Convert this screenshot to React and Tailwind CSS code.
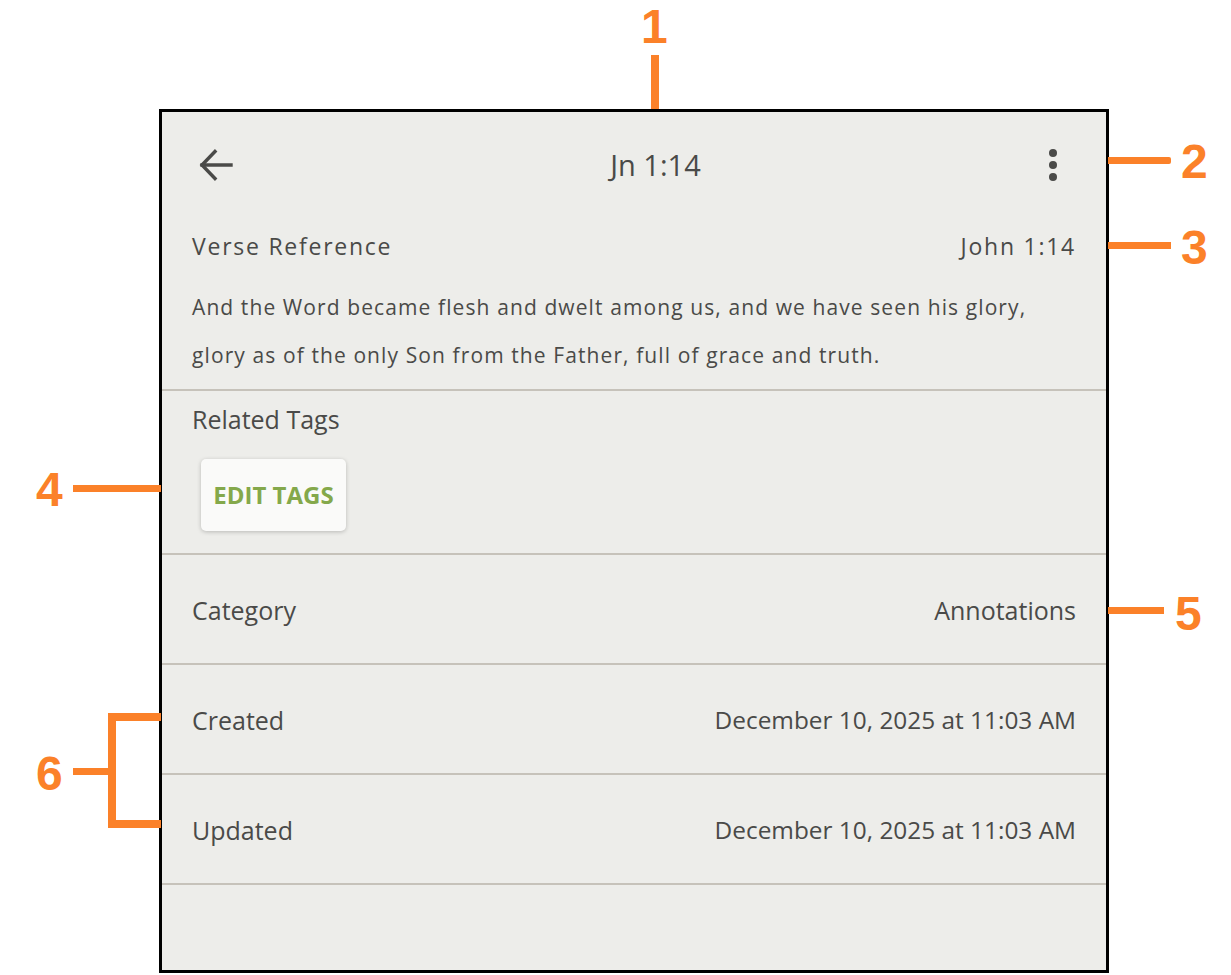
import React from "react";

const labelCls = "text-[25px] text-[#4a4a48]";

function InfoRow({ label, value, small }) {
    return (
        <div className="h-[110px] pt-[3px] flex items-center justify-between px-[30px] border-b-2 border-[#c6c2ba]">
            <span className={labelCls}>{label}</span>
            <span className={small ? "text-[24.4px] text-[#4a4a48]" : labelCls}>{value}</span>
        </div>
    );
}

function BackArrow() {
    return (
        <svg width="36" height="36" viewBox="0 0 36 36" fill="none" stroke="#4a4a48" strokeWidth="3.4" strokeLinecap="square">
            <path d="M4 18 H33" />
            <path d="M17 4.5 L4 18 L17 31.5" />
        </svg>
    );
}

function Kebab() {
    return (
        <div className="flex flex-col items-center gap-[4px]">
            <span className="w-[8px] h-[8px] rounded-full bg-[#4a4a48]" />
            <span className="w-[8px] h-[8px] rounded-full bg-[#4a4a48]" />
            <span className="w-[8px] h-[8px] rounded-full bg-[#4a4a48]" />
        </div>
    );
}

// orange callouts sitting over the screenshot
function Callouts() {
    const num = "absolute font-['Liberation_Sans',Arial,sans-serif] font-bold text-[48px] leading-none text-[#fb8129]";
    const bar = "absolute bg-[#fb8129]";
    return (
        <>
            <span className={`${num} left-[641px] top-[3px]`}>1</span>
            <div className={`${bar} left-[651px] top-[55px] w-[8px] h-[54px]`} />

            <div className={`${bar} left-[1108px] top-[157px] w-[63px] h-[7px] rounded-r-[2px]`} />
            <span className={`${num} left-[1181px] top-[138px]`}>2</span>

            <div className={`${bar} left-[1108px] top-[242px] w-[63px] h-[7px]`} />
            <span className={`${num} left-[1181px] top-[224px]`}>3</span>

            <span className={`${num} left-[36px] top-[466px]`}>4</span>
            <div className={`${bar} left-[73px] top-[485px] w-[88px] h-[7px]`} />

            <div className={`${bar} left-[1108px] top-[607px] w-[56px] h-[7px]`} />
            <span className={`${num} left-[1175px] top-[590px]`}>5</span>

            <span className={`${num} left-[36px] top-[750px]`}>6</span>
            <div className={`${bar} left-[73px] top-[768px] w-[36px] h-[7px]`} />
            <div className={`${bar} left-[108px] top-[713px] w-[8px] h-[115px]`} />
            <div className={`${bar} left-[108px] top-[713px] w-[53px] h-[8px]`} />
            <div className={`${bar} left-[108px] top-[820px] w-[53px] h-[8px]`} />
        </>
    );
}

export default function App() {
    return (
        <div className="relative w-[1231px] h-[975px] bg-white overflow-hidden font-['Open_Sans','Noto_Sans',sans-serif]">
            <div className="ml-[159px] mt-[109px] w-[950px] h-[864px] border-[3px] border-black bg-[#ededea] flex flex-col">
                {/* top bar */}
                <div className="h-[106px] flex items-center justify-between pl-[36px] pr-[49px] shrink-0">
                    <BackArrow />
                    <span className="text-[29px] text-[#4a4a48] ml-[28px]">Jn 1:14</span>
                    <Kebab />
                </div>

                {/* verse */}
                <div className="px-[30px] pb-[10px] border-b-2 border-[#c6c2ba]">
                    <div className="mt-[4px] h-[48px] flex items-center justify-between text-[23px] tracking-[1.75px] text-[#4a4a48]">
                        <span>Verse Reference</span>
                        <span>John 1:14</span>
                    </div>
                    <p className="mt-[13px] text-[21px] leading-[48px] tracking-[1.1px] text-[#4a4a48]">
                        And the Word became flesh and dwelt among us, and we have seen his glory,
                        <br />
                        glory as of the only Son from the Father, full of grace and truth.
                    </p>
                </div>

                {/* tags */}
                <div className="px-[30px] pt-[5px] pb-[22px] border-b-2 border-[#c6c2ba]">
                    <div className={`h-[48px] flex items-center ${labelCls}`}>Related Tags</div>
                    <button className="mt-[15px] ml-[9px] w-[145px] h-[72px] rounded-[5px] bg-[#fafaf9] shadow-[0_1px_4px_rgba(0,0,0,0.22)] text-[24px] font-bold text-[#84a84b]">
                        EDIT TAGS
                    </button>
                </div>

                <InfoRow label="Category" value="Annotations" />
                <InfoRow label="Created" value="December 10, 2025 at 11:03 AM" small />
                <InfoRow label="Updated" value="December 10, 2025 at 11:03 AM" small />
            </div>
            <Callouts />
        </div>
    );
}
